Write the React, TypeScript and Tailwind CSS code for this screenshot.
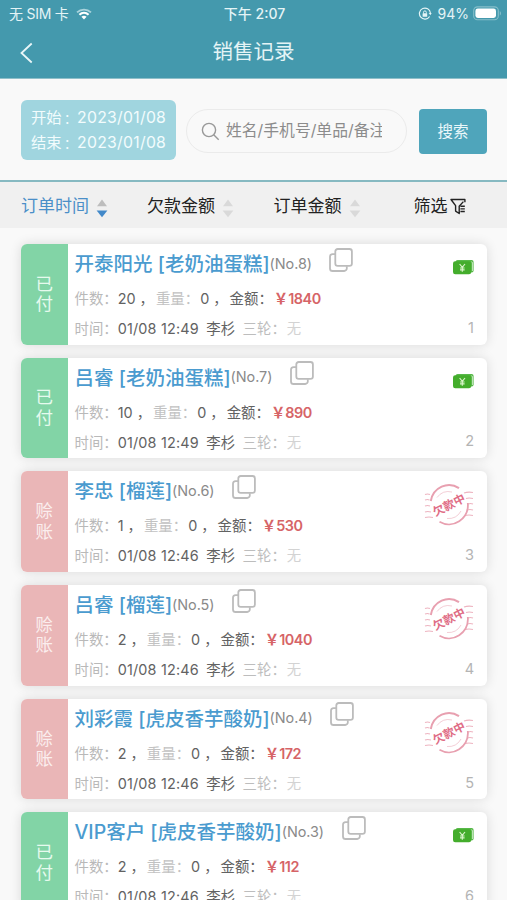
import React from "react";

type Order = {
  title: string;
  no: number;
  count: number;
  amount: number;
  time: string;
  paid: boolean;
};

const orders: Order[] = [
  { title: "开泰阳光 [老奶油蛋糕]", no: 8, count: 20, amount: 1840, time: "01/08 12:49", paid: true },
  { title: "吕睿 [老奶油蛋糕]", no: 7, count: 10, amount: 890, time: "01/08 12:49", paid: true },
  { title: "李忠 [榴莲]", no: 6, count: 1, amount: 530, time: "01/08 12:46", paid: false },
  { title: "吕睿 [榴莲]", no: 5, count: 2, amount: 1040, time: "01/08 12:46", paid: false },
  { title: "刘彩霞 [虎皮香芋酸奶]", no: 4, count: 2, amount: 172, time: "01/08 12:46", paid: false },
  { title: "VIP客户 [虎皮香芋酸奶]", no: 3, count: 2, amount: 112, time: "01/08 12:46", paid: true },
];

function WifiIcon() {
  return (
    <svg width="16" height="12" viewBox="0 0 16 12" fill="none">
      <path d="M1 4.3C5 .6 11 .6 15 4.3" stroke="#a9d3dc" strokeWidth="1.8" />
      <path d="M3.4 6.7c2.7-2.4 6.5-2.4 9.2 0" stroke="#fff" strokeWidth="2.2" />
      <path d="M5.4 8.8c1.6-1.3 3.6-1.3 5.2 0L8 11.5z" fill="#fff" />
    </svg>
  );
}

function RotationLockIcon() {
  return (
    <svg width="14" height="14" viewBox="0 0 14 14" fill="none" stroke="#e4f4f6">
      <path d="M11.6 9.5A5.5 5.5 0 1 1 12.4 6" strokeWidth="1.2" />
      <path d="M10.7 6h3l-1.4 2.2z" fill="#e4f4f6" stroke="none" />
      <rect x="4.6" y="6.2" width="4.6" height="3.6" rx=".6" fill="#e4f4f6" stroke="none" />
      <path d="M5.5 6.5V5.3a1.4 1.4 0 0 1 2.8 0v1.2" strokeWidth="1" />
    </svg>
  );
}

function BatteryIcon() {
  return (
    <svg width="29" height="15" viewBox="0 0 29 15" fill="none">
      <rect x=".7" y=".9" width="24.6" height="12.8" rx="3.8" stroke="#85bfca" strokeWidth="1.1" />
      <rect x="2.4" y="2.6" width="20.6" height="9.4" rx="2.4" fill="#fff" />
      <path d="M26.8 5v4.6c1.6-.7 1.6-3.9 0-4.6z" fill="#85bfca" />
    </svg>
  );
}

function SortArrows({ active = false }: { active?: boolean }) {
  return (
    <svg width="12" height="19" viewBox="0 0 12 19">
      <path d="M6 .5 11 7.3H1z" fill={active ? "#bdbdbd" : "#d9d9d9"} />
      <path d="M.6 11.5h10.8L6 18.3z" fill={active ? "#4289c9" : "#d9d9d9"} />
    </svg>
  );
}

function FilterIcon() {
  return (
    <svg width="16" height="17" viewBox="0 0 16 17" fill="none" stroke="#222" strokeWidth="1.4">
      <path d="M14.9 4.2V1.5H1l4.6 6.2v5.4l3.6 2.4V8.2l4.2-4.6" strokeLinejoin="round" />
      <path d="M10.4 8.3h4.4M10.4 10.9h4.4M10.4 13.5h4.4" />
    </svg>
  );
}

function CopyIcon() {
  return (
    <svg width="24" height="24" viewBox="0 0 24 24" fill="none" stroke="#bcbcbc" strokeWidth="1.8">
      <rect x="6.3" y="1" width="16.6" height="16.8" rx="2.4" />
      <path d="M6 6.2H3.6A2.6 2.6 0 0 0 1 8.8v11.6A2.6 2.6 0 0 0 3.6 23h11.6a2.6 2.6 0 0 0 2.6-2.6v-2.2" />
    </svg>
  );
}

function CashIcon() {
  return (
    <svg width="21" height="15" viewBox="0 0 21 15">
      <rect x="2.6" y="0" width="18" height="12.5" rx="2" fill="#58b94a" />
      <path d="M18.5 1.7q.9.2.9 1.3v8" stroke="#e4f5df" strokeWidth=".8" fill="none" />
      <rect x="0" y="1.2" width="18.2" height="13" rx="2.2" fill="#44ad2c" />
      <path d="m6.600 4 2.700 3.400L12 4M9.300 7.400v4.300M7 8h4.600M7 9.800h4.600" stroke="#d8f3c8" strokeWidth="1.2" fill="none" />
    </svg>
  );
}

function DebtStamp() {
  return (
    <svg width="50" height="43" viewBox="0 0 50 43" fill="none" stroke="#e8a0b0">
      <path d="M6.8 18A18.5 19.5 0 0 1 35 5.2" strokeWidth="2" />
      <path d="M43.8 20A19 19.5 0 0 1 15.5 38.8" strokeWidth="1.8" />
      <path d="M13 14.500A14.500 14.500 0 0 1 28 9M37 28a14.500 14.500 0 0 1-14 7.500" strokeWidth=".8" opacity=".65" />
      <path
        d="M1 11.500q2.500-1 5 0M1 17q2.500-1 4.500 0M1 23q2.500-1 5 0M1 29q2.500-1 6 0M1 34.500q4-1 8 0M40 10q4-1.500 9-.5M42 15.500q3-1 7 0M44 21q2.500-1 5 0M43 27q3-1 6 0M41 32.500q4-1 8 0"
        strokeWidth="1.1"
        opacity=".8"
      />
      <text
        x="25"
        y="26"
        textAnchor="middle"
        transform="rotate(-27 25 22)"
        fill="#e06c85"
        stroke="none"
        fontSize="11.5"
        fontWeight="700"
        fontFamily="'Noto Sans CJK SC', sans-serif"
      >
        欠款中
      </text>
    </svg>
  );
}

function OrderCard({ order, index }: { order: Order; index: number }) {
  return (
    <article className="flex h-[100.5px] shrink-0 overflow-hidden rounded-[6px] bg-white shadow-[0_0_12px_rgba(0,0,0,0.13)]">
      <div
        className={
          order.paid
            ? "flex w-[46.5px] shrink-0 flex-col items-center justify-center bg-[#82d4a6] text-[17.5px] leading-[20.5px] text-[#e6faee]"
            : "flex w-[46.5px] shrink-0 flex-col items-center justify-center bg-[#eab6b7] text-[17.5px] leading-[20.5px] text-[#fbeeee]"
        }
      >
        <span>{order.paid ? "已" : "赊"}</span>
        <span>{order.paid ? "付" : "账"}</span>
      </div>
      <div className="flex min-w-0 flex-1 flex-col pl-[7px] text-[14.4px] whitespace-nowrap text-[#626262]">
        <div className="flex h-[40px] items-center pt-[1px]">
          <h2 className="text-[19.5px] font-medium text-[#4a9bcf]">{order.title}</h2>
          <span className="mb-[2px] tracking-[-0.05px] text-[#8a8a8a]">(No.{order.no})</span>
          <span className="mb-[10px] ml-[17.5px]">
            <CopyIcon />
          </span>
        </div>
        <p className="h-[30px] leading-[30px]">
          <span className="text-[#b9b9b9]">件数：</span>
          {order.count}
          <span className="mr-[2px] ml-[4px] inline-block w-[14.4px]">，</span>
          <span className="text-[#c2c2c2]">重量：</span>
          <span className="ml-px">0</span>
          <span className="mr-[2px] ml-[4px] inline-block w-[14.4px]">，</span>
          金额：
          <span className="ml-[1px] font-semibold text-[#d66467]">￥</span>
          <span className="font-semibold tracking-[-0.45px] text-[#d66467]">{order.amount}</span>
        </p>
        <p className="h-[29px] leading-[29px]">
          <span className="text-[#b9b9b9]">时间：</span>
          <span className="tracking-[0.18px]">{order.time}</span>
          <span className="ml-[7.5px]">李杉</span>
          <span className="ml-[7.5px] text-[#bdbdbd]">三轮：</span>
          <span className="ml-px text-[#d3d3d3]">无</span>
        </p>
      </div>
      <div className="flex w-[60px] shrink-0 flex-col items-end justify-between pr-[13px] pb-[6px] text-[14.5px] text-[#b4b4b4]">
        <div className={order.paid ? "pt-[16px]" : "pt-[12px]"}>{order.paid ? <CashIcon /> : <DebtStamp />}</div>
        <span>{index}</span>
      </div>
    </article>
  );
}

export default function App() {
  return (
    <div className="flex h-[900px] w-[507px] flex-col overflow-hidden bg-[#f9f9f9] font-[Inter,'Noto_Sans_CJK_SC',sans-serif]">
      <header className="h-[79px] shrink-0 border-b border-[#8fbfc9] bg-[#4499ad] text-[#e4f4f6]">
        <div className="grid h-[27px] grid-cols-[1fr_auto_1fr] items-center pr-[5px] pl-[9px] text-[14px]">
          <div className="flex items-center gap-[7px]">
            <span className="tracking-[-0.25px]">无 SIM 卡</span>
            <WifiIcon />
          </div>
          <div className="pr-[2px] text-center font-medium">下午 2:07</div>
          <div className="flex items-center justify-end">
            <RotationLockIcon />
            <span className="mr-[4px] ml-[6px]">94%</span>
            <BatteryIcon />
          </div>
        </div>
        <div className="grid h-[51px] grid-cols-[1fr_auto_1fr] items-center">
          <svg className="ml-[20px]" width="13" height="22" viewBox="0 0 13 22" fill="none" stroke="#e9f6f8" strokeWidth="1.8">
            <path d="M11.7 1.5 1.5 11l10.2 9.5" />
          </svg>
          <h1 className="text-[20.5px]">销售记录</h1>
        </div>
      </header>

      <section className="flex h-[101px] shrink-0 items-center pr-[20px] pl-[21px]">
        <div className="flex h-[60px] w-[155px] shrink-0 flex-col justify-center rounded-[6px] bg-[#a0d5df] pt-[2px] pl-[10px] text-[15.3px] leading-[24.5px] whitespace-nowrap text-[#f2fcfd]">
          {[
            ["开始", "2023/01/08"],
            ["结束", "2023/01/08"],
          ].map(([label, date]) => (
            <div key={label} className="flex">
              <span>{label}</span>
              <span className="ml-[2.5px] w-[13px] text-[13px]">：</span>
              <span className="text-[15.8px] tracking-[0.25px]">{date}</span>
            </div>
          ))}
        </div>
        <div className="mt-[3px] ml-[10px] flex h-[44px] w-[221px] shrink-0 items-center rounded-full border-[1.5px] border-[#ebebeb] pl-[14px]">
          <svg width="19" height="19" viewBox="0 0 19 19" fill="none" stroke="#999" strokeWidth="1.4">
            <circle cx="8" cy="8" r="6.6" />
            <path d="m12.7 12.7 5 5" />
          </svg>
          <span className="ml-[6px] w-[156px] overflow-hidden text-[15.8px] whitespace-nowrap text-[#8c8c8c]">
            姓名/手机号/单品/备注
          </span>
        </div>
        <button className="mt-[3px] ml-auto h-[45px] w-[68px] rounded-[4px] bg-[#4fa5bb] pt-[2px] text-[15.5px] text-[#e9f7fa]">
          搜索
        </button>
      </section>

      <nav className="flex h-[48px] shrink-0 items-center border-t-2 border-[#86b9c1] bg-[#f0f0f0] pt-[3px] pl-[21px] text-[17px] whitespace-nowrap text-[#222]">
        <div className="flex w-[126px] items-center gap-[7px] text-[#4b8fc8]">
          <span>订单时间</span>
          <span className="mt-[3px]">
            <SortArrows active />
          </span>
        </div>
        <div className="flex w-[126.5px] items-center gap-[7px]">
          <span>欠款金额</span>
          <span className="mt-[3px]">
            <SortArrows />
          </span>
        </div>
        <div className="flex w-[140px] items-center gap-[7px]">
          <span>订单金额</span>
          <span className="mt-[3px]">
            <SortArrows />
          </span>
        </div>
        <div className="flex items-center gap-[2px]">
          <span>筛选</span>
          <FilterIcon />
        </div>
      </nav>

      <main className="flex min-h-0 flex-1 flex-col gap-[13.2px] overflow-hidden pt-[16px] pr-[20px] pl-[21px]">
        {orders.map((order, i) => (
          <OrderCard key={order.no} order={order} index={i + 1} />
        ))}
      </main>
    </div>
  );
}
